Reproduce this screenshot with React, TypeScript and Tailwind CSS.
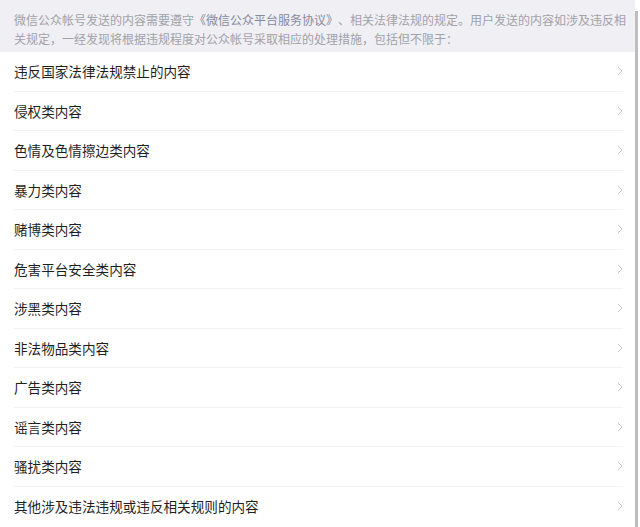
const ITEMS = [
  "违反国家法律法规禁止的内容",
  "侵权类内容",
  "色情及色情擦边类内容",
  "暴力类内容",
  "赌博类内容",
  "危害平台安全类内容",
  "涉黑类内容",
  "非法物品类内容",
  "广告类内容",
  "谣言类内容",
  "骚扰类内容",
  "其他涉及违法违规或违反相关规则的内容",
];

function Chevron() {
  return (
    <svg width="6" height="10" viewBox="0 0 6 10" className="shrink-0">
      <path d="M1 1 L5 5 L1 9" fill="none" stroke="#c7c7cc" strokeWidth="1" />
    </svg>
  );
}

export default function App() {
  return (
    <div
      className="flex w-[640px] h-[527px] overflow-hidden bg-white"
      style={{ fontFamily: '"Noto Sans CJK SC", "Noto Sans", sans-serif' }}
    >
      <div className="flex-1 flex flex-col">
        {/* Notice */}
        <div className="h-[52px] shrink-0 bg-[#efeff4] pl-[14px] pr-[4px] pt-[10px] text-[12px] leading-[19px] text-[#a2a2a8] [text-spacing-trim:space-all]">
          微信公众帐号发送的内容需要遵守
          <span className="text-[#868a9c]">《微信公众平台服务协议》</span>
          、相关法律法规的规定。用户发送的内容如涉及违反相关规定，一经发现将根据违规程度对公众帐号采取相应的处理措施，包括但不限于：
        </div>

        {/* List */}
        <div className="flex flex-col">
          {ITEMS.map((item, i) => (
            <div
              key={item}
              className={`h-[39.5px] ml-[14px] mr-[12px] flex items-center justify-between ${
                i < ITEMS.length - 1 ? "border-b border-[#f2f2f4]" : ""
              }`}
            >
              <span className="text-[13.6px] text-[#1f1f1f]">{item}</span>
              <Chevron />
            </div>
          ))}
        </div>
      </div>

      {/* Scrollbar */}
      <div className="w-[5px] shrink-0 bg-white pt-[11px]">
        <div className="h-full w-[3px] bg-[#bdbdbd]" />
      </div>
    </div>
  );
}
